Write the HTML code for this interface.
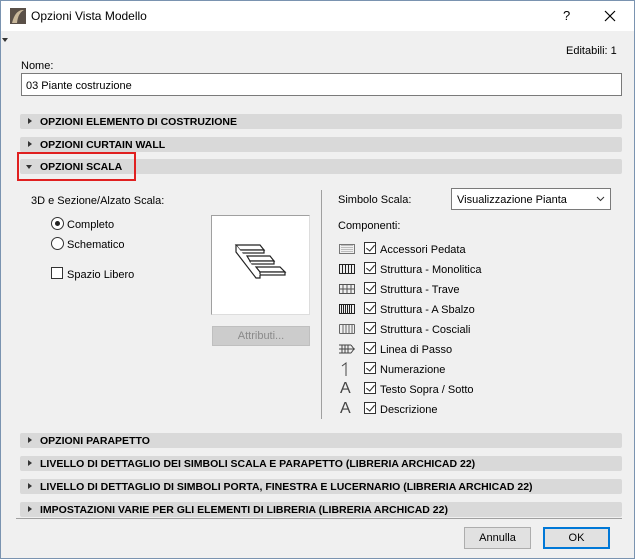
<!DOCTYPE html>
<html><head><style>
*{box-sizing:border-box;margin:0;padding:0}
body{width:635px;height:559px;overflow:hidden;background:#f0f0f0;font-family:"Liberation Sans",sans-serif;font-size:11px;color:#000;position:relative}
.a{position:absolute;white-space:nowrap}
.bar{position:absolute;left:20px;width:602px;height:15px;background:#d9d9d9;border-radius:2px;font-weight:bold;font-size:10.5px;line-height:16px;padding-left:20px}
.bar:before{content:"";position:absolute;left:8px;top:4px;border-left:4px solid #333;border-top:3.5px solid transparent;border-bottom:3.5px solid transparent}
.bar.open:before{left:6px;top:6px;border-top:4px solid #333;border-left:3.5px solid transparent;border-right:3.5px solid transparent;border-bottom:0}
.cb{position:absolute;width:12px;height:12px;border:1px solid #333;background:#fff}
.cb.k:after{content:"";position:absolute;left:3px;top:0px;width:4px;height:7px;border-right:1.3px solid #222;border-bottom:1.3px solid #222;transform:rotate(40deg)}
.rb{position:absolute;width:13px;height:13px;border:1px solid #333;border-radius:50%;background:#fff}
.ic{position:absolute;left:339px;width:16px;height:10px}
</style></head><body>
<div class="a" style="left:0;top:0;width:635px;height:31px;background:#fff"></div>
<div class="a" style="left:0;top:0;width:1px;height:559px;background:#7a93b0"></div>
<div class="a" style="right:0;top:0;width:1px;height:559px;background:#7a93b0"></div>
<div class="a" style="left:0;bottom:0;width:635px;height:1px;background:#7a93b0"></div>
<div class="a" style="left:0;top:0;width:635px;height:1px;background:#7a93b0"></div>
<svg class="a" style="left:10px;top:8px" width="16" height="16"><rect width="16" height="16" fill="#5a5048"/><path d="M2 15 Q5 3 12 2 L14 2 Q8 5 7 15Z" fill="#c8b79a"/></svg>
<div class="a" style="left:31px;top:9px;font-size:12px">Opzioni Vista Modello</div>
<div class="a" style="left:563px;top:8px;font-size:13px">?</div>
<svg class="a" style="left:604px;top:10px" width="12" height="12"><path d="M1 1L11 11M11 1L1 11" stroke="#000" stroke-width="1.2"/></svg>
<div class="a" style="left:2px;top:38px;border-top:4px solid #333;border-left:3.5px solid transparent;border-right:3.5px solid transparent"></div>
<div class="a" style="left:566px;top:45px">Editabili: 1</div>
<div class="a" style="left:21px;top:60px">Nome:</div>
<div class="a" style="left:21px;top:73px;width:601px;height:23px;background:#fff;border:1px solid #7a7a7a;padding:6px 4px 0">03 Piante costruzione</div>
<div class="bar" style="top:114px">OPZIONI ELEMENTO DI COSTRUZIONE</div>
<div class="bar" style="top:137px">OPZIONI CURTAIN WALL</div>
<div class="bar open" style="top:159px">OPZIONI SCALA</div>
<div class="a" style="left:17px;top:152px;width:119px;height:29px;border:2px solid #e02020"></div>
<div class="a" style="left:31px;top:195px">3D e Sezione/Alzato Scala:</div>
<div class="rb" style="left:51px;top:217px"><div style="position:absolute;left:3px;top:3px;width:5px;height:5px;border-radius:50%;background:#222"></div></div>
<div class="a" style="left:67px;top:219px">Completo</div>
<div class="rb" style="left:51px;top:237px"></div>
<div class="a" style="left:67px;top:239px">Schematico</div>
<div class="cb" style="left:51px;top:267px"></div>
<div class="a" style="left:67px;top:269px">Spazio Libero</div>
<div class="a" style="left:211px;top:215px;width:99px;height:100px;background:#fff;border:1px solid #a0a0a0;border-right-color:#ddd;border-bottom-color:#ddd"></div>
<svg class="a" style="left:230px;top:240px" width="60" height="45"><g fill="#fff" stroke="#222" stroke-width="1.2"><path d="M6 5 L30 5 L34 10 L10 10Z"/><rect x="10" y="10" width="24" height="3"/><path d="M17 16 L40 16 L44 21 L20 21Z"/><rect x="20" y="21" width="24" height="3"/><path d="M26 27 L50 27 L55 32 L30 32Z"/><rect x="30" y="32" width="25" height="3"/><path d="M6 5 L6 12 L26 38 L30 38 L30 35"/></g></svg>
<div class="a" style="left:212px;top:326px;width:98px;height:20px;background:#ccc;border:1px solid #bfbfbf;color:#8a8a8a;text-align:center;line-height:19px">Attributi...</div>
<div class="a" style="left:321px;top:190px;width:1px;height:229px;background:#a0a0a0"></div>
<div class="a" style="left:338px;top:194px">Simbolo Scala:</div>
<div class="a" style="left:451px;top:188px;width:160px;height:22px;background:#fff;border:1px solid #7a7a7a;padding:5px 5px 0">Visualizzazione Pianta</div>
<svg class="a" style="left:596px;top:196px" width="9" height="6"><path d="M1 1L4.5 4.5L8 1" stroke="#333" fill="none"/></svg>
<div class="a" style="left:338px;top:220px">Componenti:</div>
<svg class="ic" style="top:244px"><rect x="0.5" y="0.5" width="15" height="9" fill="none" stroke="#777"/><path d="M3 1V9M5 1V9M7 1V9M9 1V9M11 1V9M13 1V9" stroke="#888" stroke-dasharray="1 1"/></svg>
<svg class="ic" style="top:264px"><rect x="0.5" y="0.5" width="15" height="9" fill="none" stroke="#222"/><path d="M3.5 1V9M6.5 1V9M9.5 1V9M12.5 1V9" stroke="#222"/></svg>
<svg class="ic" style="top:284px"><rect x="0.5" y="0.5" width="15" height="9" fill="none" stroke="#555"/><path d="M0 5H16M4 1V9M8 1V9M12 1V9" stroke="#555"/></svg>
<svg class="ic" style="top:304px"><rect x="0.5" y="0.5" width="15" height="9" fill="none" stroke="#222"/><path d="M2.5 1V9M4.5 1V9M6.5 1V9M8.5 1V9M10.5 1V9M12.5 1V9" stroke="#222"/></svg>
<svg class="ic" style="top:324px"><path d="M0.5 0.5H15.5M0.5 9.5H15.5M0.5 0.5V9.5M15.5 0.5V9.5M4 1V9M7 1V9M10 1V9M13 1V9" stroke="#666" fill="none"/></svg>
<svg class="ic" style="top:344px"><path d="M0 1H12M0 9H12M0 5H16M3 1V9M6 1V9M9 1V9M12 1L15 5L12 9" stroke="#444" fill="none"/></svg>
<svg class="a" style="left:340px;top:362px" width="10" height="15"><path d="M2 4L6 1V14" stroke="#444" fill="none"/></svg>
<div class="a" style="left:340px;top:380px;font-size:16px;color:#444">A</div>
<div class="a" style="left:340px;top:400px;font-size:16px;color:#444">A</div>
<div class="cb k" style="left:364px;top:242px"></div><div class="a" style="left:380px;top:244px">Accessori Pedata</div>
<div class="cb k" style="left:364px;top:262px"></div><div class="a" style="left:380px;top:264px">Struttura - Monolitica</div>
<div class="cb k" style="left:364px;top:282px"></div><div class="a" style="left:380px;top:284px">Struttura - Trave</div>
<div class="cb k" style="left:364px;top:302px"></div><div class="a" style="left:380px;top:304px">Struttura - A Sbalzo</div>
<div class="cb k" style="left:364px;top:322px"></div><div class="a" style="left:380px;top:324px">Struttura - Cosciali</div>
<div class="cb k" style="left:364px;top:342px"></div><div class="a" style="left:380px;top:344px">Linea di Passo</div>
<div class="cb k" style="left:364px;top:362px"></div><div class="a" style="left:380px;top:364px">Numerazione</div>
<div class="cb k" style="left:364px;top:382px"></div><div class="a" style="left:380px;top:384px">Testo Sopra / Sotto</div>
<div class="cb k" style="left:364px;top:402px"></div><div class="a" style="left:380px;top:404px">Descrizione</div>
<div class="bar" style="top:433px">OPZIONI PARAPETTO</div>
<div class="bar" style="top:456px">LIVELLO DI DETTAGLIO DEI SIMBOLI SCALA E PARAPETTO (LIBRERIA ARCHICAD 22)</div>
<div class="bar" style="top:479px">LIVELLO DI DETTAGLIO DI SIMBOLI PORTA, FINESTRA E LUCERNARIO (LIBRERIA ARCHICAD 22)</div>
<div class="bar" style="top:502px">IMPOSTAZIONI VARIE PER GLI ELEMENTI DI LIBRERIA (LIBRERIA ARCHICAD 22)</div>
<div class="a" style="left:16px;top:518px;width:606px;height:1px;background:#a0a0a0"></div>
<div class="a" style="left:464px;top:527px;width:67px;height:22px;background:#e1e1e1;border:1px solid #adadad;text-align:center;line-height:21px">Annulla</div>
<div class="a" style="left:543px;top:527px;width:67px;height:22px;background:#e1e1e1;border:2px solid #0078d7;text-align:center;line-height:19px">OK</div>
</body></html>
